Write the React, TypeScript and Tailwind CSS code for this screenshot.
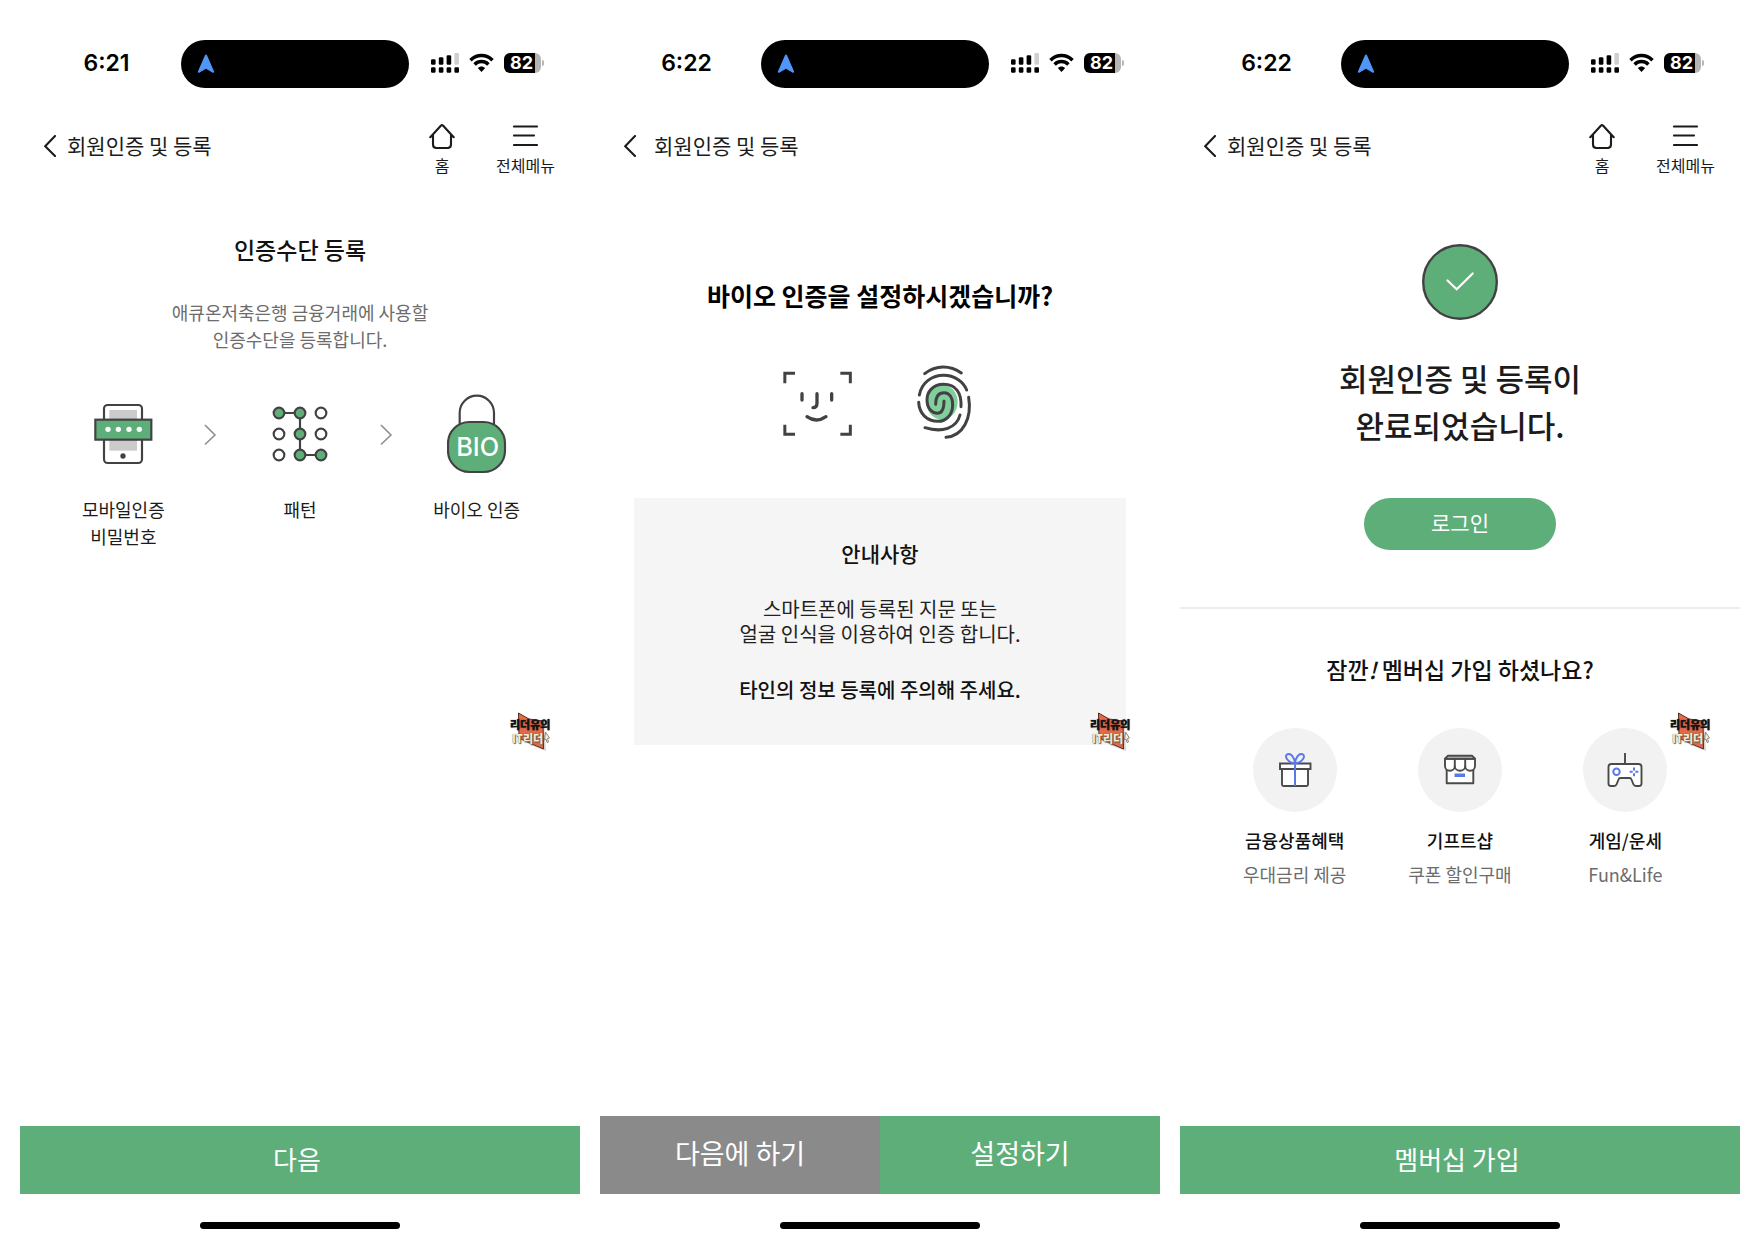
import type { ReactNode } from "react";
import { clsx } from "clsx";

function StatusBar({ time }: { time: string }) {
  return (
    <div className="flex items-center h-12 mt-10 pr-[10px]">
      <div className="flex-1 pl-3 pb-0.5 text-center text-[23px] font-semibold text-black font-[Inter,sans-serif]">{time}</div>
      <div className="flex items-center w-[228px] h-12 px-4 rounded-full bg-black">
        <svg width="18" height="20" viewBox="0 0 18 20" fill="#4f96f6">
          <path d="M9 .6c.5 0 .9.3 1.1.8l6.9 15.9c.5 1.200-.6 2-1.600 1.300L9 14.800l-6.400 3.800C1.600 19.300.5 18.500 1 17.300L7.900 1.400C8.100.9 8.500.6 9 .6z" />
        </svg>
      </div>
      <div className="flex flex-1 items-center justify-center gap-[10px] pl-1 pr-2 pb-0.5">
        <svg width="28" height="20" viewBox="0 0 28 20">
          <rect x="0" y="6.300" width="4.600" height="5.400" rx="1.200" />
          <rect x="7.800" y="4.300" width="4.600" height="7.400" rx="1.200" />
          <rect x="15.600" y="2.300" width="4.600" height="9.400" rx="1.200" />
          <rect x="23.400" y="0" width="4.600" height="11.700" rx="1.200" fill="#cfcfcf" />
          <rect x="0" y="14.300" width="4.600" height="5.500" rx="1.200" />
          <rect x="7.800" y="14.300" width="4.600" height="5.500" rx="1.200" />
          <rect x="15.600" y="14.300" width="4.600" height="5.500" rx="1.200" />
          <rect x="23.400" y="14.300" width="4.600" height="5.500" rx="1.200" />
        </svg>
        <svg width="25" height="20" viewBox="0 0 25 20">
          <path d="M1.500 7.200C7.700 1 17.300 1 23.500 7.200M5.600 11.400C9.600 7.600 15.400 7.600 19.400 11.400" fill="none" stroke="#000" strokeWidth="3.500" />
          <path d="M12.500 19l-3.700-3.900c2-2.100 5.400-2.100 7.400 0z" />
        </svg>
        <div className="flex items-center gap-px">
          <div className="flex items-center justify-center w-[37px] h-5 rounded-md bg-linear-to-r from-black from-84% to-[#b5b5b5] to-84% pr-0.5 text-lg leading-5 font-bold text-white font-[Inter,sans-serif]">
            82
          </div>
          <div className="w-0.5 h-1.5 rounded-r-full bg-[#b5b5b5]" />
        </div>
      </div>
    </div>
  );
}

function Header({ wide, menu }: { wide?: boolean; menu?: boolean }) {
  return (
    <header className="flex items-start justify-between min-h-14 mt-[35px] pl-6 pr-[25px] text-[#1b1b1b]">
      <a href="#" className={clsx("flex items-center h-[46px] text-[21px]", wide ? "gap-[18px]" : "gap-[11px]")}>
        <svg width="12" height="22" viewBox="0 0 12 22" fill="none" stroke="currentColor" strokeWidth="2.100" strokeLinecap="round">
          <path d="M11 1L1.200 11.200L11 21" />
        </svg>
        회원인증 및 등록
      </a>
      {menu && (
        <nav className="flex gap-[41px] text-base leading-6">
          <button className="flex flex-col items-center gap-1">
            <svg width="26" height="26" viewBox="0 0 26 26" fill="none" stroke="currentColor" strokeWidth="2.100" strokeLinecap="round" strokeLinejoin="round">
              <path d="M1.300 14.200L11.800 2.700q1.200-1.200 2.400 0L24.700 14.200M4 11.500V21.500q0 3.500 3.500 3.500h11q3.500 0 3.500-3.500V11.500" />
            </svg>
            홈
          </button>
          <button className="flex flex-col items-center gap-1">
            <svg width="26" height="26" viewBox="1 0 26 26" fill="none" stroke="currentColor" strokeWidth="2.200" strokeLinecap="round">
              <path d="M2 3.500H25M2 12.500H22M2 22H25" />
            </svg>
            전체메뉴
          </button>
        </nav>
      )}
    </header>
  );
}

// Channel mark that floats over every screen
function Watermark() {
  return (
    <div className="absolute top-[712px] right-[28px] w-[42px] h-10 text-left">
      <svg className="absolute inset-0" width="42" height="40" viewBox="0 0 42 40">
        <path d="M10 3L22 9L34 11L36 39L23 34L11 28Z" fill="#b9b2aa" opacity=".6" />
        <path d="M8.500 1L19 7L33 9L33.500 37L22 32L9 26Z" fill="#e2694c" stroke="#5c2c20" strokeWidth="1" />
        <path d="M35.500 20l4 6-2 .5 1 3.500-1.500.5-1-3.500-1.500 1z" fill="#f3efe4" stroke="#8f8878" strokeWidth="1" />
      </svg>
      <p className="relative pt-[5px] text-[11px] leading-[14px] font-black text-[#141414] whitespace-nowrap [text-shadow:0_0_1px_#141414]">리더유의</p>
      <p className="relative text-[11px] leading-[14px] font-black text-[#f8ead0] whitespace-nowrap pl-0.5 [text-shadow:0_0_1px_#4a3a30,1px_1px_1px_#6b5a4c]">IT리더</p>
    </div>
  );
}

type PhoneProps = { time: string; wide?: boolean; menu?: boolean; footer: ReactNode; children: ReactNode };

function Phone({ time, wide, menu, footer, children }: PhoneProps) {
  return (
    <section className="relative flex flex-col min-h-screen">
      <StatusBar time={time} />
      <Header wide={wide} menu={menu} />
      <main className="flex-1">{children}</main>
      <Watermark />
      <footer>
        <div className="flex text-white">{footer}</div>
        <div className="h-[52px] pt-7">
          <div className="mx-auto w-[200px] h-[7px] rounded-full bg-black" />
        </div>
      </footer>
    </section>
  );
}

const INK = "#424242";
const GREEN = "#5eae7a";

function MobileIcon() {
  return (
    <svg width="60" height="80" viewBox="99 522 180 240">
      <rect x="132" y="555" width="114" height="174" rx="11" fill="#fff" stroke={INK} strokeWidth="6.500" />
      <rect x="148" y="570" width="83" height="122" fill="#cbcbcb" />
      <rect x="106" y="599" width="168" height="60" fill={GREEN} stroke={INK} strokeWidth="6.500" />
      {[144, 175, 207, 238].map((x) => (
        <circle key={x} cx={x} cy="628" r="8" fill="#fff" />
      ))}
      <circle cx="189" cy="708" r="8" fill={INK} />
    </svg>
  );
}

function PatternIcon() {
  const on = ["0-0", "1-0", "1-1", "1-2", "2-2"];
  return (
    <svg width="60" height="80" viewBox="630 522 180 240" stroke={INK} strokeWidth="6.500">
      <path d="M657 579H720V705H782" fill="none" />
      {[0, 1, 2].map((row) =>
        [0, 1, 2].map((col) => (
          <circle key={`${col}-${row}`} cx={657 + col * 63} cy={579 + row * 63} r="16" fill={on.includes(`${col}-${row}`) ? GREEN : "#fff"} />
        ))
      )}
    </svg>
  );
}

function BioIcon() {
  return (
    <svg width="60" height="80" viewBox="1160 522 180 240">
      <path d="M1198 612V579a51.500 52 0 0 1 103 0V612" fill="none" stroke={INK} strokeWidth="6.500" />
      <rect x="1163" y="606" width="171" height="150" rx="64" fill={GREEN} stroke={INK} strokeWidth="6.500" />
      <text x="1252" y="708" textAnchor="middle" fontFamily="Inter, sans-serif" fontSize="76" fontWeight="500" fill="#fff">
        BIO
      </text>
    </svg>
  );
}

function StepArrow() {
  return (
    <svg className="mt-[30px] shrink-0" width="12" height="22" viewBox="2 0 12 22" fill="none" stroke="#8c8c8c" strokeWidth="1.500" overflow="visible">
      <path d="M1 1L11 11L1 20.500" />
    </svg>
  );
}

function Step({ icon, children }: { icon: ReactNode; children: ReactNode }) {
  return (
    <li className="flex flex-1 flex-col items-center gap-[22px] text-lg leading-[27px] text-center text-[#1b1b1b]">
      {icon}
      <p>{children}</p>
    </li>
  );
}

function FaceIcon() {
  return (
    <svg width="70" height="80" viewBox="68 40 210 240" fill="none" stroke={INK} strokeWidth="9">
      <path d="M73.500 101V71H104M240 71H270V101M270 225V254H240M104 254H73.500V225" />
      <path d="M125 132V151M214 132V151M170 132V160Q170 174 158 174M140 201Q168 221 197 201" strokeLinecap="round" strokeWidth="10" />
    </svg>
  );
}

function FingerprintIcon() {
  return (
    <svg width="60" height="80" viewBox="473 40 180 240" fill="none" stroke={INK} strokeWidth="9" strokeLinecap="round">
      <ellipse cx="548" cy="157" rx="47" ry="53" fill="#82cf9e" stroke="none" />
      <path d="M496 72C530 46 572 46 606 70" />
      <path d="M480 136C488 96 520 77 553 77C585 77 612 96 622 121" />
      <path d="M628 143C638 205 612 259 560 263" />
      <path d="M605 171C607 130 590 104 553 104C520 104 503 127 503 150C503 176 518 191 534 191C550 191 554 176 554 154" />
      <path d="M529 164C529 140 538 129 554 129C572 129 580 146 580 165C580 196 560 215 536 215C503 215 480 192 478 158" />
      <path d="M602 196C592 236 548 250 497 234" />
    </svg>
  );
}

function GiftIcon() {
  return (
    <svg width="84" height="84" viewBox="0 0 84 84" strokeWidth="1.900" stroke="#4a4a4a" fill="#fff">
      <path d="M29 41h26v15.500q0 1.500-1.500 1.500h-23q-1.500 0-1.500-1.500zM27 35.500h30.500V41H27z" />
      <path d="M42 58V35.500C34 34.500 31 27.500 34.500 26.300C38 25 41.500 29.500 42 35.500C42.500 29.500 46 25 49.500 26.300C53 27.500 50 34.500 42 35.500" fill="none" stroke="#5b79e6" strokeWidth="2" />
    </svg>
  );
}

function ShopIcon() {
  return (
    <svg width="84" height="84" viewBox="0 0 84 84" strokeWidth="1.900" stroke="#4a4a4a" fill="#fff" strokeLinejoin="round">
      <path d="M28.700 38h26.600v17.300H28.700z" />
      <path d="M27 30.700V38a4.900 4.800 0 0 0 9.800 0a5.200 4.800 0 0 0 10.400 0a4.900 4.800 0 0 0 9.800 0V30.700z" />
      <path d="M30 27.700h24l3 3H27z" fill="#c9c9c9" />
      <path d="M36.800 31v7M47.200 31v7" fill="none" />
      <path d="M36.500 45.500h10.500v3.500H36.500z" fill="#5b79e6" stroke="none" />
    </svg>
  );
}

function GameIcon() {
  return (
    <svg width="84" height="84" viewBox="0 0 84 84" strokeWidth="1.900" stroke="#4a4a4a" fill="#fff" strokeLinejoin="round">
      <path d="M42 25v11" />
      <path d="M28.500 36h27q3 0 3 3v16.500q0 2.500-2.500 2.500h-3q-2 0-2.700-2L48.500 51.500q-.5-1.500-2-1.500h-9q-1.500 0-2 1.500L33.700 56q-.7 2-2.700 2h-3q-2.500 0-2.500-2.500V39q0-3 3-3z" />
      <circle cx="33.500" cy="43.800" r="3.200" stroke="#5b79e6" strokeWidth="2" />
      <path d="M51 39.500v3M51 45.200v3M46.700 43.800h3M52.300 43.800h3" stroke="#5b79e6" strokeWidth="2" />
    </svg>
  );
}

const benefits = [
  { title: "금융상품혜택", desc: "우대금리 제공", icon: <GiftIcon /> },
  { title: "기프트샵", desc: "쿠폰 할인구매", icon: <ShopIcon /> },
  { title: "게임/운세", desc: "Fun&Life", icon: <GameIcon /> },
];

export default function App() {
  return (
    <div className="grid grid-cols-3 gap-5 min-h-screen px-5 bg-white text-center text-[#111] font-['Noto_Sans_CJK_KR',sans-serif]">
      {/* Register methods */}
      <Phone time="6:21" menu footer={<button className="flex-1 h-[68px] pr-1.5 pb-1 bg-[#5eae7a] text-[26px]">다음</button>}>
        <h1 className="pt-[54px] text-[23px] leading-8 font-medium">인증수단 등록</h1>
        <p className="mt-[34px] text-lg leading-[27px] text-[#6c6c6c]">
          애큐온저축은행 금융거래에 사용할
          <br />
          인증수단을 등록합니다.
        </p>
        <ol className="flex items-start mt-[41px] px-[21px]">
          <Step icon={<MobileIcon />}>
            모바일인증
            <br />
            비밀번호
          </Step>
          <StepArrow />
          <Step icon={<PatternIcon />}>패턴</Step>
          <StepArrow />
          <Step icon={<BioIcon />}>바이오 인증</Step>
        </ol>
      </Phone>

      {/* Bio setup */}
      <Phone
        time="6:22"
        wide
        footer={
          <>
            <button className="flex-1 h-[78px] pb-1 bg-[#8a8a8a] text-[27px]">다음에 하기</button>
            <button className="flex-1 h-[78px] pb-1 bg-[#5eae7a] text-[27px]">설정하기</button>
          </>
        }
      >
        <h1 className="pt-[98px] text-[25px] leading-9 font-bold text-black">바이오 인증을 설정하시겠습니까?</h1>
        <div className="flex justify-center gap-16 mt-[50px]">
          <FaceIcon />
          <FingerprintIcon />
        </div>
        <div className="mx-[34px] mt-[55px] pt-10 pb-[43px] bg-[#f5f5f5] text-xl leading-[25px]">
          <h2 className="text-[21px] leading-[30px] font-medium">안내사항</h2>
          <p className="mt-7 text-[#222]">
            스마트폰에 등록된 지문 또는
            <br />
            얼굴 인식을 이용하여 인증 합니다.
          </p>
          <p className="mt-[31px] font-medium">타인의 정보 등록에 주의해 주세요.</p>
        </div>
      </Phone>

      {/* Done */}
      <Phone time="6:22" menu footer={<button className="flex-1 h-[68px] pr-1.5 pb-1 bg-[#5eae7a] text-[26px]">멤버십 가입</button>}>
        <svg className="mx-auto mt-[65px]" width="76" height="76" viewBox="0 0 76 76" fill="none">
          <circle cx="38" cy="38" r="36.800" fill={GREEN} stroke={INK} strokeWidth="2.400" />
          <path d="M25.500 36.500L34.700 45.200L50.700 29.500" stroke="#fff" strokeWidth="2.200" strokeLinecap="round" />
        </svg>
        <h1 className="mt-[34px] text-[31px] leading-[47px] font-medium text-[#1b1b1b]">
          회원인증 및 등록이
          <br />
          완료되었습니다.
        </h1>
        <button className="mt-[50px] w-48 h-[52px] rounded-full bg-[#5eae7a] pb-0.5 text-[21px] text-white">로그인</button>
        <hr className="mt-[57px] border-t-2 border-[#ededed]" />
        <h2 className="mt-11 text-[23px] leading-8 font-medium">
          잠깐<em>!</em> 멤버십 가입 하셨나요?
        </h2>
        <ul className="grid grid-cols-3 mt-[43px] px-8 text-lg leading-7">
          {benefits.map((item) => (
            <li key={item.title} className="flex flex-col items-center">
              <div className="rounded-full bg-[#f2f2f2]">{item.icon}</div>
              <p className="mt-3.5 font-medium">{item.title}</p>
              <p className="mt-1.5 text-[#6c6c6c]">{item.desc}</p>
            </li>
          ))}
        </ul>
      </Phone>
    </div>
  );
}
